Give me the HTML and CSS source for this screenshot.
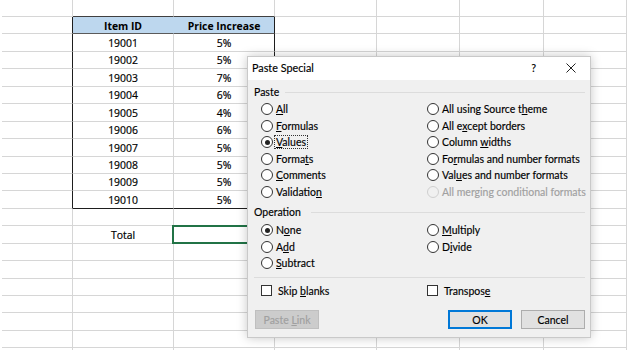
FILE: index.html
```html
<!DOCTYPE html>
<html>
<head>
<meta charset="utf-8">
<link rel="stylesheet" href="styles.css">
</head>
<body>
<div class="sheet">
  <div class="row first"><div class="c c0"></div><div class="c c1 tt"></div><div class="c c2 tt"></div><div class="c c3"></div><div class="c c4"></div><div class="c c5"></div><div class="c c6"></div></div>
  <div class="row hdr"><div class="c c0 tl"></div><div class="c c1 th">Item ID</div><div class="c c2 th tr">Price Increase</div><div class="c c3"></div><div class="c c4"></div><div class="c c5"></div><div class="c c6"></div></div>
  <div class="row"><div class="c c0 tl"></div><div class="c c1">19001</div><div class="c c2 tr">5%</div><div class="c c3"></div><div class="c c4"></div><div class="c c5"></div><div class="c c6"></div></div>
  <div class="row"><div class="c c0 tl"></div><div class="c c1">19002</div><div class="c c2 tr">5%</div><div class="c c3"></div><div class="c c4"></div><div class="c c5"></div><div class="c c6"></div></div>
  <div class="row"><div class="c c0 tl"></div><div class="c c1">19003</div><div class="c c2 tr">7%</div><div class="c c3"></div><div class="c c4"></div><div class="c c5"></div><div class="c c6"></div></div>
  <div class="row"><div class="c c0 tl"></div><div class="c c1">19004</div><div class="c c2 tr">6%</div><div class="c c3"></div><div class="c c4"></div><div class="c c5"></div><div class="c c6"></div></div>
  <div class="row"><div class="c c0 tl"></div><div class="c c1">19005</div><div class="c c2 tr">4%</div><div class="c c3"></div><div class="c c4"></div><div class="c c5"></div><div class="c c6"></div></div>
  <div class="row"><div class="c c0 tl"></div><div class="c c1">19006</div><div class="c c2 tr">6%</div><div class="c c3"></div><div class="c c4"></div><div class="c c5"></div><div class="c c6"></div></div>
  <div class="row"><div class="c c0 tl"></div><div class="c c1">19007</div><div class="c c2 tr">5%</div><div class="c c3"></div><div class="c c4"></div><div class="c c5"></div><div class="c c6"></div></div>
  <div class="row"><div class="c c0 tl"></div><div class="c c1">19008</div><div class="c c2 tr">5%</div><div class="c c3"></div><div class="c c4"></div><div class="c c5"></div><div class="c c6"></div></div>
  <div class="row"><div class="c c0 tl"></div><div class="c c1">19009</div><div class="c c2 tr">5%</div><div class="c c3"></div><div class="c c4"></div><div class="c c5"></div><div class="c c6"></div></div>
  <div class="row"><div class="c c0 tl"></div><div class="c c1 tb">19010</div><div class="c c2 tr tb">5%</div><div class="c c3"></div><div class="c c4"></div><div class="c c5"></div><div class="c c6"></div></div>
  <div class="row"><div class="c c0"></div><div class="c c1"></div><div class="c c2"></div><div class="c c3"></div><div class="c c4"></div><div class="c c5"></div><div class="c c6"></div></div>
  <div class="row"><div class="c c0"></div><div class="c c1">Total</div><div class="c c2 sel"></div><div class="c c3"></div><div class="c c4"></div><div class="c c5"></div><div class="c c6"></div></div>
  <div class="row"><div class="c c0"></div><div class="c c1"></div><div class="c c2"></div><div class="c c3"></div><div class="c c4"></div><div class="c c5"></div><div class="c c6"></div></div>
  <div class="row"><div class="c c0"></div><div class="c c1"></div><div class="c c2"></div><div class="c c3"></div><div class="c c4"></div><div class="c c5"></div><div class="c c6"></div></div>
  <div class="row"><div class="c c0"></div><div class="c c1"></div><div class="c c2"></div><div class="c c3"></div><div class="c c4"></div><div class="c c5"></div><div class="c c6"></div></div>
  <div class="row"><div class="c c0"></div><div class="c c1"></div><div class="c c2"></div><div class="c c3"></div><div class="c c4"></div><div class="c c5"></div><div class="c c6"></div></div>
  <div class="row"><div class="c c0"></div><div class="c c1"></div><div class="c c2"></div><div class="c c3"></div><div class="c c4"></div><div class="c c5"></div><div class="c c6"></div></div>
  <div class="row"><div class="c c0"></div><div class="c c1"></div><div class="c c2"></div><div class="c c3"></div><div class="c c4"></div><div class="c c5"></div><div class="c c6"></div></div>
  <div class="row"><div class="c c0"></div><div class="c c1"></div><div class="c c2"></div><div class="c c3"></div><div class="c c4"></div><div class="c c5"></div><div class="c c6"></div></div>
</div>

<div class="dialog">
  <div class="titlebar">
    <span class="title">Paste Special</span>
    <span class="help">?</span>
    <svg class="close" width="10" height="10" viewBox="0 0 10 10"><path d="M0.5 0.5 L9.5 9.5 M9.5 0.5 L0.5 9.5" stroke="#222" stroke-width="1"/></svg>
  </div>
  <div class="body">
    <div class="group first-group">Paste</div>
    <div class="opts six">
      <label class="opt"><span class="radio"></span><span><u>A</u>ll</span></label>
      <label class="opt"><span class="radio"></span><span>All using Source t<u>h</u>eme</span></label>
      <label class="opt"><span class="radio"></span><span><u>F</u>ormulas</span></label>
      <label class="opt"><span class="radio"></span><span>All e<u>x</u>cept borders</span></label>
      <label class="opt"><span class="radio on"></span><span class="focus"><u>V</u>alues</span></label>
      <label class="opt"><span class="radio"></span><span>Column <u>w</u>idths</span></label>
      <label class="opt"><span class="radio"></span><span>Forma<u>t</u>s</span></label>
      <label class="opt"><span class="radio"></span><span>Fo<u>r</u>mulas and number formats</span></label>
      <label class="opt"><span class="radio"></span><span><u>C</u>omments</span></label>
      <label class="opt"><span class="radio"></span><span>Val<u>u</u>es and number formats</span></label>
      <label class="opt"><span class="radio"></span><span>Validatio<u>n</u></span></label>
      <label class="opt disabled"><span class="radio"></span><span>All merging conditional formats</span></label>
    </div>
    <div class="group op-group">Operation</div>
    <div class="opts three">
      <label class="opt"><span class="radio on"></span><span>N<u>o</u>ne</span></label>
      <label class="opt"><span class="radio"></span><span><u>M</u>ultiply</span></label>
      <label class="opt"><span class="radio"></span><span>A<u>d</u>d</span></label>
      <label class="opt"><span class="radio"></span><span>D<u>i</u>vide</span></label>
      <label class="opt"><span class="radio"></span><span><u>S</u>ubtract</span></label>
    </div>
    <div class="sep"></div>
    <div class="opts checks">
      <label class="opt"><span class="check"></span><span>Skip <u>b</u>lanks</span></label>
      <label class="opt"><span class="check"></span><span>Transpos<u>e</u></span></label>
    </div>
    <div class="buttons">
      <button class="btn disabled">Paste <u>L</u>ink</button>
      <span class="spacer"></span>
      <button class="btn default">OK</button>
      <button class="btn">Cancel</button>
    </div>
  </div>
</div>
</body>
</html>
```

FILE: styles.css
```css
* { box-sizing: border-box; }
html, body { margin: 0; padding: 0; }
body {
  width: 627px;
  height: 350px;
  overflow: hidden;
  background: #ffffff;
  position: relative;
  font-family: "Open Sans", "Liberation Sans", sans-serif;
}

/* spreadsheet */
.sheet {
  padding-left: 2px;
  font-size: 10.4px;
  color: #000;
  -webkit-text-stroke: 0.2px;
}
.row {
  display: flex;
  height: 17.45px;
}
.row.first { height: 17px; }
.c {
  border-right: 1px solid #d6d6d6;
  border-bottom: 1px solid #d6d6d6;
  display: flex;
  align-items: center;
  justify-content: center;
  line-height: 1;
  padding-top: 1px;
}
.c0 { width: 71px; }
.c1 { width: 101px; }
.c2 { width: 101px; }
.c3 { width: 102px; }
.c4 { width: 83px; }
.c5 { width: 84px; }
.c6 { flex: 1; }

.tt { border-bottom-color: #404040; }
.tl { border-right-color: #1e1e1e; }
.tr { border-right-color: #1e1e1e; }
.tb { border-bottom-color: #1e1e1e; }
.th {
  background: #bdd7ee;
  font-weight: 700;
  border-bottom-color: #5a5a5a;
  -webkit-text-stroke: 0;
}
.hdr .c1 { border-right-color: #bdd7ee; }
.sel { position: relative; }
.sel::after {
  content: "";
  position: absolute;
  left: -2px;
  top: -1px;
  right: -1px;
  bottom: -1px;
  border: 2px solid #217346;
}

/* dialog */
.dialog {
  position: absolute;
  left: 247px;
  top: 56px;
  width: 344px;
  height: 282px;
  background: #f0f0f0;
  border: 1px solid #c9c9c9;
  box-shadow: 0 0 10px rgba(0, 0, 0, 0.22);
  font-family: Lato, "Noto Sans", sans-serif;
  font-size: 10.5px;
  color: #000;
  -webkit-text-stroke: 0.15px;
}
.titlebar {
  height: 23px;
  background: #ffffff;
  display: flex;
  align-items: center;
  padding-left: 4px;
  padding-bottom: 2px;
}
.title { font-size: 10.8px; flex: 1; }
.help { margin-right: 30px; font-size: 10.8px; }
.close { margin-right: 14px; }

.body {
  padding: 5px 5px 0 6px;
  display: flex;
  flex-direction: column;
}
.group {
  display: flex;
  align-items: center;
  height: 14px;
  line-height: 14px;
}
.group::after {
  content: "";
  flex: 1;
  border-top: 1px solid #dcdcdc;
  margin-left: 6px;
}
.op-group { margin-top: 5px; }
.op-group::after { margin-left: 10px; }

.opts {
  display: grid;
  grid-template-columns: 166px 1fr;
  grid-auto-rows: 16.5px;
  padding-left: 7px;
}
.six { margin-top: 2px; }
.three { margin-top: 3px; height: 49.5px; }
.opt {
  display: flex;
  align-items: center;
  gap: 3px;
  white-space: nowrap;
}
.radio {
  width: 12px;
  height: 12px;
  border: 1px solid #333;
  border-radius: 50%;
  background: #fff;
  flex: none;
  position: relative;
}
.radio.on::after {
  content: "";
  position: absolute;
  left: 2.5px;
  top: 2.5px;
  width: 5px;
  height: 5px;
  border-radius: 50%;
  background: #222;
}
.disabled { color: #a0a0a0; }
.opt.disabled .radio { border-color: #cfcfcf; background: #f0f0f0; }
.focus {
  outline: 1px dotted #333;
  outline-offset: 0;
  padding: 0 1px;
  margin-left: -1px;
}
u { text-decoration-thickness: 1px; text-underline-offset: 1px; }

.sep {
  border-top: 1px solid #dcdcdc;
  margin-top: 5px;
}
.checks { margin-top: 5px; }
.check {
  width: 11px;
  height: 11px;
  border: 1px solid #333;
  background: #fff;
  flex: none;
  margin-right: 3px;
}
.buttons {
  display: flex;
  margin-top: 11px;
  gap: 9px;
}
.spacer { flex: 1; }
.btn {
  font-family: inherit;
  font-size: 10.5px;
  width: 64px;
  height: 19px;
  padding: 0;
  background: #e1e1e1;
  border: 1px solid #adadad;
  color: #000;
  -webkit-text-stroke: 0.15px;
}
.btn.disabled {
  background: #cccccc;
  border-color: #bfbfbf;
  color: #a0a0a0;
  margin-left: 1px;
}
.btn.default {
  border: 2px solid #0078d7;
}
```
